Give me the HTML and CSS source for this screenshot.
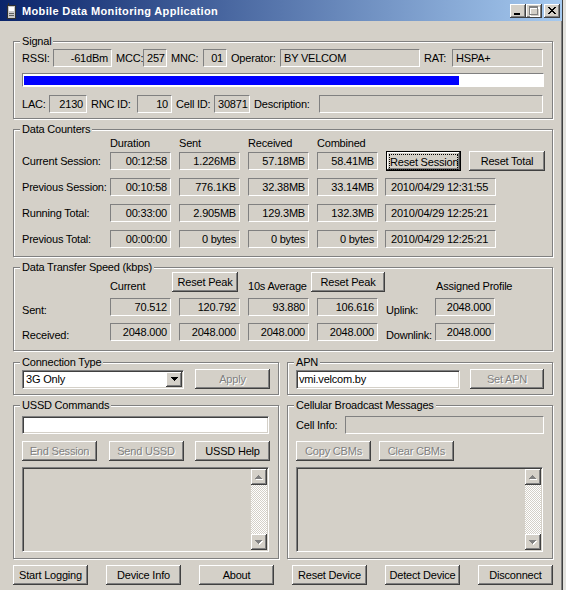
FILE: index.html
```html
<!DOCTYPE html>
<html lang="en">
<head>
    <meta charset="UTF-8">
    <title>Mobile Data Monitoring Application</title>
    <link rel="stylesheet" href="styles.css">
</head>
<body>
<div class="window">
    <div class="titlebar">
        <svg class="app-icon" width="16" height="16" viewBox="0 0 16 16">
            <rect x="4.5" y="2.5" width="8" height="13" fill="#c8c8c8" stroke="#303030"/>
            <rect x="6" y="4" width="5" height="4" fill="#ffffff"/>
            <rect x="6" y="10" width="5" height="1" fill="#606060"/>
            <rect x="6" y="12" width="5" height="1" fill="#606060"/>
            <rect x="5" y="0" width="1" height="3" fill="#303030"/>
        </svg>
        <span class="title">Mobile Data Monitoring Application</span>
        <div class="caption-btns">
            <span class="cbtn"><svg width="16" height="14"><rect x="4" y="9" width="6" height="2" fill="#000"/></svg></span>
            <span class="cbtn"><svg width="16" height="14">
                <path d="M4 3h10v10H4z M5 5v7h8V5z" fill="#fff" fill-rule="evenodd"/>
                <path d="M3 2h9v9H3z M4 4v6h7V4z" fill="#808080" fill-rule="evenodd"/>
            </svg></span>
            <span class="cbtn close"><svg width="16" height="14">
                <path d="M4 3h2v1h1v1h2V4h1V3h2v1h-1v1h-1v1H9v1h1v1h1v1h1v1h-2V9H9V8H7v1H6v1H4V9h1V8h1V7h1V6H6V5H5V4H4z" fill="#000"/>
            </svg></span>
        </div>
    </div>

    <div class="client">
        <fieldset class="group signal">
            <legend>Signal</legend>
            <div class="sig-row sig-top">
                <span class="lbl">RSSI:</span><span class="field num">-61dBm</span>
                <span class="lbl">MCC:</span><span class="field num">257</span>
                <span class="lbl">MNC:</span><span class="field num">01</span>
                <span class="lbl">Operator:</span><span class="field">BY VELCOM</span>
                <span class="lbl">RAT:</span><span class="field">HSPA+</span>
            </div>
            <div class="progress"><div class="fill" style="width: 84%"></div></div>
            <div class="sig-row sig-bottom">
                <span class="lbl">LAC:</span><span class="field num">2130</span>
                <span class="lbl">RNC ID:</span><span class="field num">10</span>
                <span class="lbl">Cell ID:</span><span class="field num">30871</span>
                <span class="lbl">Description:</span><span class="field"></span>
            </div>
        </fieldset>

        <fieldset class="group counters">
            <legend>Data Counters</legend>
            <div class="count-head">
                <span></span><span>Duration</span><span>Sent</span><span>Received</span><span>Combined</span>
            </div>
            <div class="count-grid">
                <span class="lbl">Current Session:</span>
                <span class="field num">00:12:58</span>
                <span class="field num">1.226MB</span>
                <span class="field num">57.18MB</span>
                <span class="field num">58.41MB</span>
                <button class="btn default"><span class="focus">Reset Session</span></button>
                <button class="btn wide">Reset Total</button>

                <span class="lbl">Previous Session:</span>
                <span class="field num">00:10:58</span>
                <span class="field num">776.1KB</span>
                <span class="field num">32.38MB</span>
                <span class="field num">33.14MB</span>
                <span class="field date">2010/04/29 12:31:55</span>

                <span class="lbl">Running Total:</span>
                <span class="field num">00:33:00</span>
                <span class="field num">2.905MB</span>
                <span class="field num">129.3MB</span>
                <span class="field num">132.3MB</span>
                <span class="field date">2010/04/29 12:25:21</span>

                <span class="lbl">Previous Total:</span>
                <span class="field num">00:00:00</span>
                <span class="field num">0 bytes</span>
                <span class="field num">0 bytes</span>
                <span class="field num">0 bytes</span>
                <span class="field date">2010/04/29 12:25:21</span>
            </div>
        </fieldset>

        <fieldset class="group speed">
            <legend>Data Transfer Speed (kbps)</legend>
            <div class="speed-head">
                <span></span>
                <span class="htext">Current</span>
                <button class="btn peak1">Reset Peak</button>
                <span class="htext avg">10s Average</span>
                <button class="btn peak2">Reset Peak</button>
                <span class="htext profile">Assigned Profile</span>
            </div>
            <div class="speed-grid">
                <span class="lbl">Sent:</span>
                <span class="field num">70.512</span>
                <span class="field num">120.792</span>
                <span class="field num">93.880</span>
                <span class="field num">106.616</span>
                <span class="lbl">Uplink:</span>
                <span class="field num">2048.000</span>

                <span class="lbl">Received:</span>
                <span class="field num">2048.000</span>
                <span class="field num">2048.000</span>
                <span class="field num">2048.000</span>
                <span class="field num">2048.000</span>
                <span class="lbl">Downlink:</span>
                <span class="field num">2048.000</span>
            </div>
        </fieldset>

        <div class="pair">
            <fieldset class="group half short">
                <legend>Connection Type</legend>
                <div class="inline-row">
                    <div class="combo">
                        <span class="combo-text">3G Only</span>
                        <span class="combo-arrow"><svg width="7" height="4"><path d="M0 0h7v1H6v1H5v1H4v1H3V3H2V2H1V1H0z" fill="#000"/></svg></span>
                    </div>
                    <button class="btn" disabled>Apply</button>
                </div>
            </fieldset>
            <fieldset class="group half short">
                <legend>APN</legend>
                <div class="inline-row">
                    <div class="edit apn">vmi.velcom.by</div>
                    <button class="btn set-apn" disabled>Set APN</button>
                </div>
            </fieldset>
        </div>

        <div class="pair">
            <fieldset class="group half tall">
                <legend>USSD Commands</legend>
                <div class="edit ussd"></div>
                <div class="btn-row spread">
                    <button class="btn" disabled>End Session</button>
                    <button class="btn" disabled>Send USSD</button>
                    <button class="btn">USSD Help</button>
                </div>
                <div class="listbox">
                    <div class="list-body"></div>
                    <div class="vscroll">
                        <span class="sbtn"><svg width="8" height="5"><path d="M4 1h1v1h1v1h1v1h1v1H1V4h1V3h1V2h1z" fill="#fff"/><path d="M3 0h1v1h1v1h1v1h1v1H0V3h1V2h1V1h1z" fill="#808080"/></svg></span>
                        <span class="strack"></span>
                        <span class="sbtn"><svg width="8" height="5"><path d="M1 1h7v1H7v1H6v1H5v1H4V4H3V3H2V2H1z" fill="#fff"/><path d="M0 0h7v1H6v1H5v1H4v1H3V3H2V2H1V1H0z" fill="#808080"/></svg></span>
                    </div>
                </div>
            </fieldset>
            <fieldset class="group half tall">
                <legend>Cellular Broadcast Messages</legend>
                <div class="cell-info">
                    <span class="lbl">Cell Info:</span>
                    <span class="field cell-field"></span>
                </div>
                <div class="btn-row">
                    <button class="btn" disabled>Copy CBMs</button>
                    <button class="btn" disabled>Clear CBMs</button>
                </div>
                <div class="listbox">
                    <div class="list-body"></div>
                    <div class="vscroll">
                        <span class="sbtn"><svg width="8" height="5"><path d="M4 1h1v1h1v1h1v1h1v1H1V4h1V3h1V2h1z" fill="#fff"/><path d="M3 0h1v1h1v1h1v1h1v1H0V3h1V2h1V1h1z" fill="#808080"/></svg></span>
                        <span class="strack"></span>
                        <span class="sbtn"><svg width="8" height="5"><path d="M1 1h7v1H7v1H6v1H5v1H4V4H3V3H2V2H1z" fill="#fff"/><path d="M0 0h7v1H6v1H5v1H4v1H3V3H2V2H1V1H0z" fill="#808080"/></svg></span>
                    </div>
                </div>
            </fieldset>
        </div>

        <div class="bottom-btns">
            <button class="btn">Start Logging</button>
            <button class="btn">Device Info</button>
            <button class="btn">About</button>
            <button class="btn">Reset Device</button>
            <button class="btn">Detect Device</button>
            <button class="btn">Disconnect</button>
        </div>
    </div>
</div>
</body>
</html>
```

FILE: styles.css
```css
body {
    margin: 0;
    background: #e2e1dd;
    font: 11px "Liberation Sans", Arial, sans-serif;
    letter-spacing: -0.2px;
    color: #000;
}

.window {
    width: 563px;
    height: 590px;
    box-sizing: border-box;
    background: #d4d0c8;
    border-right: 1px solid #404040;
    box-shadow: inset -1px 0 #808080;
    overflow: hidden;
}

/* title bar */
.titlebar {
    height: 21px;
    display: flex;
    align-items: center;
    padding: 0 2px 0 3px;
    background: linear-gradient(90deg, #0a246a, #a6caf0);
}

.app-icon {
    flex: none;
}

.title {
    flex: 1;
    margin-left: 3px;
    color: #fff;
    font-weight: bold;
    letter-spacing: 0.35px;
    white-space: nowrap;
}

.caption-btns {
    display: flex;
}

.cbtn {
    width: 16px;
    height: 14px;
    background: #d4d0c8;
    box-shadow: inset -1px -1px #404040, inset 1px 1px #fff, inset -2px -2px #808080;
}

.cbtn svg {
    display: block;
}

.cbtn.close {
    margin-left: 2px;
}

/* client area */
.client {
    padding: 14px 0 0 13px;
    width: 540px;
}

.group {
    margin: 0;
    padding: 1px 8px 0 8px;
    box-sizing: border-box;
    min-width: 0;
    border: 1px solid #808080;
    box-shadow: inset 1px 1px #fff, 1px 1px #fff;
}

.group legend {
    padding: 0 2px;
    margin-left: -2px;
    height: 13px;
    line-height: 13px;
    background: #d4d0c8;
}

.lbl {
    white-space: nowrap;
}

.field {
    height: 18px;
    box-sizing: border-box;
    padding: 0 3px;
    line-height: 16px;
    white-space: nowrap;
    overflow: hidden;
    border: 1px solid;
    border-color: #808080 #fff #fff #808080;
    background: #d4d0c8;
}

.field.num {
    text-align: right;
}

/* signal */
.signal {
    width: 540px;
    height: 84px;
}

.sig-row {
    display: grid;
    height: 18px;
    align-items: center;
}

.sig-row .lbl ~ .lbl {
    padding-left: 4px;
}

.sig-top {
    grid-template-columns: 31px 59px 31px 24px 36px 24px 53px 140px 32px 91px;
}

.sig-bottom {
    grid-template-columns: 27px 38px 50px 35px 42px 36px 69px 224px;
}

.progress {
    height: 14px;
    margin: 6px 0 8px;
    box-sizing: border-box;
    padding: 2px 1px 1px;
    border: 1px solid;
    border-color: #808080 #fff #fff #808080;
    background: #fff;
}

.progress .fill {
    height: 100%;
    background: #0000ff;
}

/* data counters */
.counters {
    width: 540px;
    height: 134px;
    margin-top: 4px;
}

.count-head,
.count-grid {
    display: grid;
    grid-template-columns: 80px repeat(4, 61px) 75px 76px;
    column-gap: 8px;
}

.count-head {
    height: 13px;
    line-height: 13px;
    margin-bottom: 2px;
}

.count-grid {
    grid-auto-rows: 18px;
    row-gap: 8px;
    align-items: center;
}

.field.date {
    grid-column: span 2;
    width: 111px;
    margin-left: -1px;
    padding-left: 5px;
}

/* speed */
.speed {
    width: 540px;
    height: 90px;
    margin-top: 4px;
}

.speed-head {
    display: grid;
    grid-template-columns: 88px 62px 66px 73px 74px auto;
    height: 20px;
    margin: -3px 0 6px;
    align-items: end;
}

.htext {
    line-height: 13px;
    margin-bottom: -1px;
    white-space: nowrap;
}

.htext.avg {
    padding-left: 10px;
}

.htext.profile {
    padding-left: 51px;
}

.speed-head .peak1 {
    width: 66px;
}

.speed-head .peak2 {
    width: 74px;
}

.speed-grid {
    display: grid;
    grid-template-columns: 80px repeat(4, 61px) 41px 60px;
    column-gap: 8px;
    grid-auto-rows: 18px;
    row-gap: 7px;
}

.speed-grid .lbl {
    padding-top: 6px;
    line-height: 13px;
}

/* paired groups */
.pair {
    display: flex;
    gap: 8px;
    margin-top: 4px;
}

.pair:first-of-type {
    margin-top: 5px;
}

.half {
    width: 266px;
}

.half.short {
    height: 39px;
}

.half.tall {
    height: 160px;
}

.inline-row {
    display: flex;
    align-items: center;
    justify-content: space-between;
    height: 20px;
    margin-top: -1px;
}

.combo {
    width: 162px;
    height: 19px;
    box-sizing: border-box;
    display: flex;
    background: #fff;
    border: 1px solid;
    border-color: #808080 #fff #fff #808080;
    box-shadow: inset 1px 1px #404040, inset -1px -1px #d4d0c8;
    padding: 1px;
}

.combo-text {
    flex: 1;
    padding-left: 2px;
    line-height: 15px;
}

.combo-arrow {
    width: 16px;
    height: 15px;
    display: flex;
    align-items: center;
    justify-content: center;
    background: #d4d0c8;
    box-shadow: inset -1px -1px #404040, inset 1px 1px #fff, inset -2px -2px #808080;
}

.combo-arrow svg {
    display: block;
}

.edit {
    box-sizing: border-box;
    background: #fff;
    border: 1px solid;
    border-color: #808080 #fff #fff #808080;
    box-shadow: inset 1px 1px #404040, inset -1px -1px #d4d0c8;
    padding: 0 2px;
    white-space: nowrap;
}

.edit.apn {
    width: 164px;
    height: 19px;
    line-height: 17px;
}

.btn.set-apn {
    width: 74px;
}

.edit.ussd {
    width: 247px;
    height: 18px;
    margin-top: 3px;
}

.btn-row {
    display: flex;
    gap: 8px;
    margin-top: 7px;
}

.btn-row.spread {
    justify-content: space-between;
}

.cell-info {
    display: flex;
    align-items: center;
    justify-content: space-between;
    height: 18px;
    margin-top: 3px;
}

.cell-field {
    width: 199px;
}

.listbox {
    display: flex;
    width: 247px;
    height: 85px;
    margin-top: 6px;
    box-sizing: border-box;
    border: 1px solid;
    border-color: #808080 #fff #fff #808080;
    box-shadow: inset 1px 1px #404040, inset -1px -1px #d4d0c8;
    padding: 1px;
}

.list-body {
    flex: 1;
}

.vscroll {
    width: 16px;
    display: flex;
    flex-direction: column;
}

.sbtn {
    height: 16px;
    display: flex;
    align-items: center;
    justify-content: center;
    background: #d4d0c8;
    box-shadow: inset -1px -1px #404040, inset 1px 1px #fff, inset -2px -2px #808080;
}

.sbtn svg {
    display: block;
}

.strack {
    flex: 1;
    background: repeating-conic-gradient(#fff 0 25%, #d4d0c8 0 50%) 0 0 / 2px 2px;
}

/* buttons */
.btn {
    width: 75px;
    height: 20px;
    padding: 0;
    font: inherit;
    letter-spacing: inherit;
    color: #000;
    background: #d4d0c8;
    border: 0;
    box-shadow: inset -1px -1px #404040, inset 1px 1px #fff, inset -2px -2px #808080;
    white-space: nowrap;
}

.btn.wide {
    width: 76px;
}

.btn:disabled {
    color: #808080;
    text-shadow: 1px 1px #fff;
}

.btn.default {
    box-shadow: inset 0 0 0 1px #000, inset -2px -2px #404040, inset 2px 2px #fff, inset -3px -3px #808080;
}

.btn .focus {
    display: block;
    margin: 1px 3px 0;
    border: 1px dotted #000;
    line-height: 14px;
}

.bottom-btns {
    display: flex;
    justify-content: space-between;
    width: 540px;
    margin-top: 6px;
}
```
